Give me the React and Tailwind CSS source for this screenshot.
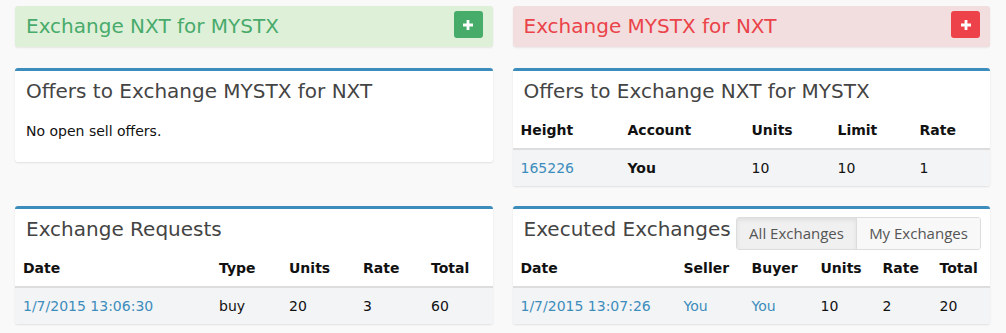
import React from "react";

const font = { fontFamily: '"DejaVu Sans", Verdana, sans-serif' };

const Plus = () => (
  <svg width="10" height="10" viewBox="0 0 10 10">
    <path d="M3.6 0h2.8v3.6H10v2.8H6.4V10H3.6V6.4H0V3.6h3.6z" fill="#fff" />
  </svg>
);

const Callout = ({ title, tone }) => {
  const green = tone === "green";
  return (
    <div
      className={`h-[41px] rounded-[3px] shadow-[0_1px_2px_rgba(0,0,0,0.08)] flex items-start justify-between pl-[11px] pr-[10px] mb-[21px] ${
        green ? "bg-[#dff0d8]" : "bg-[#f2dede]"
      }`}
    >
      <h2
        className={`text-[20px] leading-[41px] ${green ? "text-[#48ab6b]" : "text-[#ea4349]"}`}
      >
        {title}
      </h2>
      <button
        className={`mt-[5px] w-[29px] h-[27px] rounded-[3px] flex items-center justify-center ${
          green ? "bg-[#47ab6a]" : "bg-[#ee424b]"
        }`}
      >
        <Plus />
      </button>
    </div>
  );
};

const Box = ({ title, right, children }) => (
  <div className="bg-white rounded-[3px] border-t-[3px] border-[#3c8dbc] shadow-[0_1px_2px_rgba(0,0,0,0.1)] mb-[20px]">
    <div className="flex items-start justify-between">
      <h3 className="pl-[11px] pr-[4px] pt-[10px] pb-[10px] text-[20px] leading-[21px] text-[#444] whitespace-nowrap">
        {title}
      </h3>
      {right}
    </div>
    {children}
  </div>
);

const Table = ({ cols, head, rows }) => (
  <div>
    <div className={`grid ${cols} border-b-2 border-[#ddd]`}>
      {head.map((h) => (
        <div key={h} className="px-2 py-2 text-[14px] leading-[20px] font-bold text-[#111]">
          {h}
        </div>
      ))}
    </div>
    {rows.map((r, i) => (
      <div key={i} className={`grid ${cols} bg-[#f3f4f6] rounded-b-[3px]`}>
        {r.map((c, j) => (
          <div key={j} className={`px-2 py-2 text-[14px] leading-[20px] ${c.cls || "text-[#111]"}`}>
            {c.v}
          </div>
        ))}
      </div>
    ))}
  </div>
);

const link = "text-[#3c8dbc]";

export default function App() {
  return (
    <div className="min-h-[333px] bg-[#f9f9f9] pt-[6px] pl-[15px] pr-[16px]" style={font}>
      <div className="grid grid-cols-2 gap-x-5 items-start">
        <Callout title="Exchange NXT for MYSTX" tone="green" />
        <Callout title="Exchange MYSTX for NXT" tone="red" />

        <Box title="Offers to Exchange MYSTX for NXT">
          <p className="px-[11px] pt-[10px] pb-[22px] text-[14px] leading-[18px] text-[#111]">
            No open sell offers.
          </p>
        </Box>

        <Box title="Offers to Exchange NXT for MYSTX">
          <Table
            cols="grid-cols-[107px_124px_86px_82px_1fr]"
            head={["Height", "Account", "Units", "Limit", "Rate"]}
            rows={[
              [
                { v: "165226", cls: link },
                { v: "You", cls: "font-bold text-[#111]" },
                { v: "10" },
                { v: "10" },
                { v: "1" },
              ],
            ]}
          />
        </Box>

        <Box title="Exchange Requests">
          <Table
            cols="grid-cols-[196px_70px_74px_68px_1fr]"
            head={["Date", "Type", "Units", "Rate", "Total"]}
            rows={[
              [
                { v: "1/7/2015 13:06:30", cls: link },
                { v: "buy" },
                { v: "20" },
                { v: "3" },
                { v: "60" },
              ],
            ]}
          />
        </Box>

        <Box
          title="Executed Exchanges"
          right={
            <div
              className="mt-[8px] mr-[9px] flex h-[33px] rounded-[3px] border border-[#ddd] text-[15px] text-[#555] overflow-hidden"
              style={{ fontFamily: '"Open Sans", sans-serif' }}
            >
              <button className="w-[120px] bg-[#f0f0f0] shadow-[inset_0_2px_4px_rgba(0,0,0,0.08)] border-r border-[#ddd]">
                All Exchanges
              </button>
              <button className="w-[123px] bg-[#f8f8f8]">My Exchanges</button>
            </div>
          }
        >
          <Table
            cols="grid-cols-[163px_68px_69px_62px_57px_1fr]"
            head={["Date", "Seller", "Buyer", "Units", "Rate", "Total"]}
            rows={[
              [
                { v: "1/7/2015 13:07:26", cls: link },
                { v: "You", cls: link },
                { v: "You", cls: link },
                { v: "10" },
                { v: "2" },
                { v: "20" },
              ],
            ]}
          />
        </Box>
      </div>
    </div>
  );
}
